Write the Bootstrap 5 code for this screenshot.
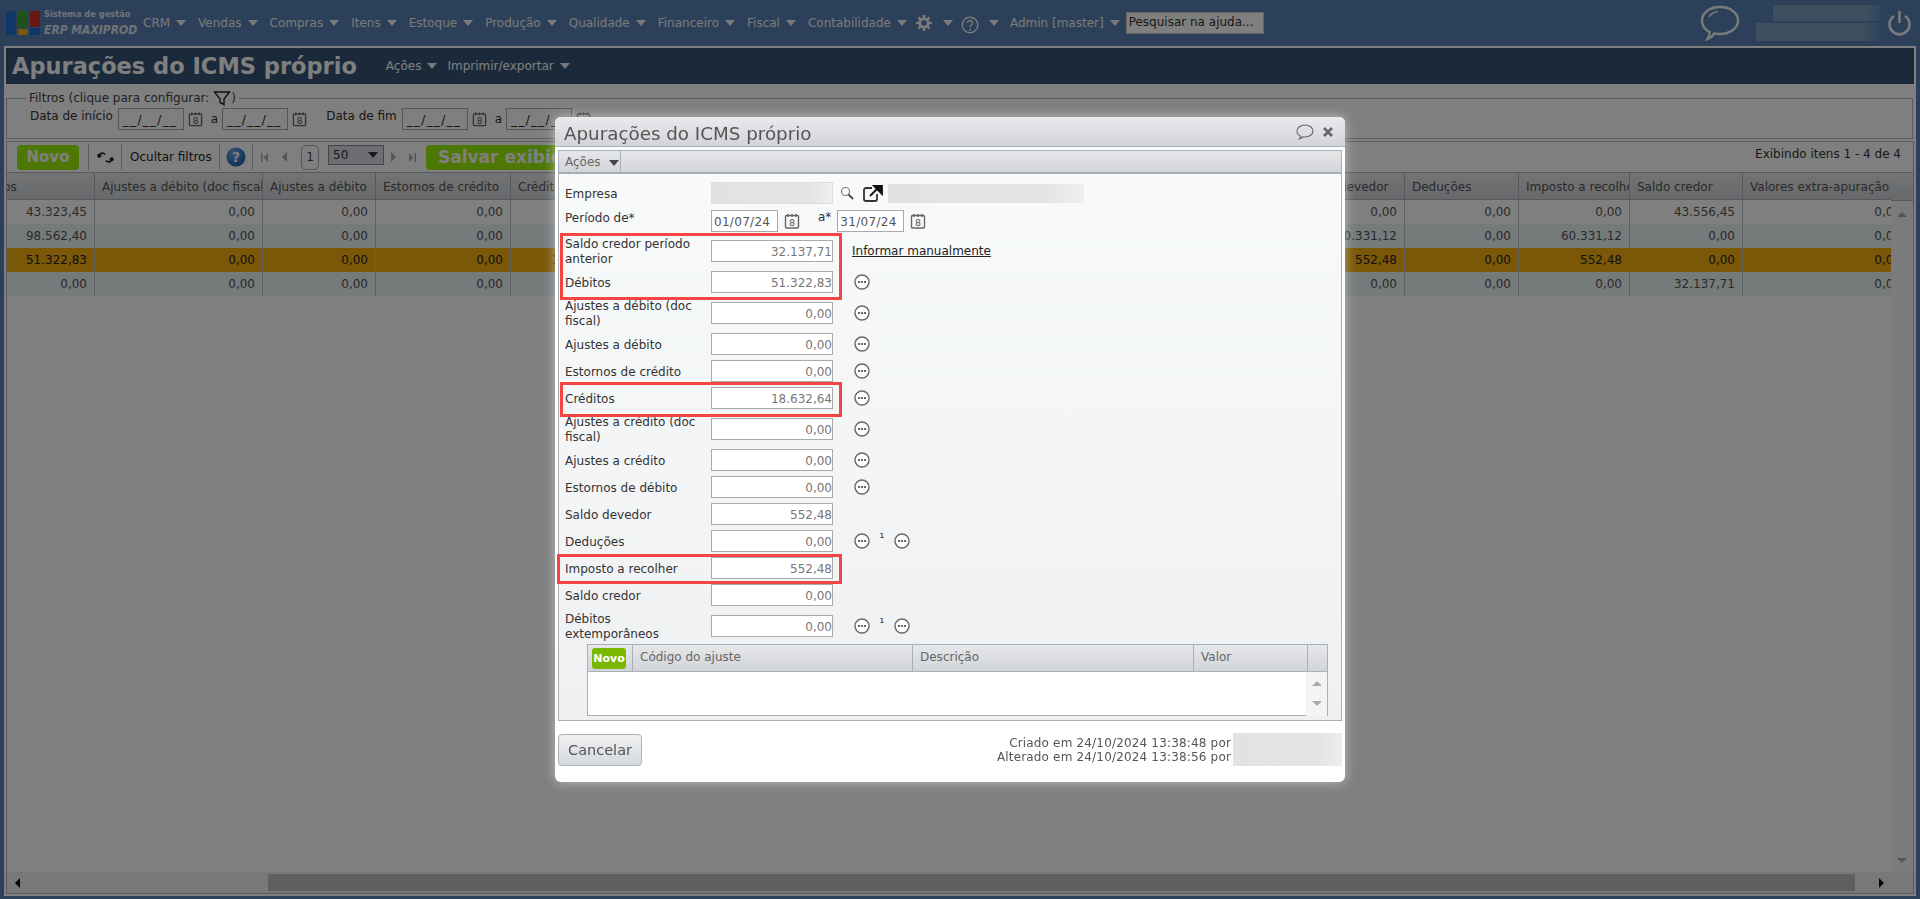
<!DOCTYPE html>
<html lang="pt-BR">
<head>
<meta charset="utf-8">
<title>Apurações do ICMS próprio</title>
<link href="https://cdn.jsdelivr.net/npm/bootstrap@5.3.0/dist/css/bootstrap.min.css" rel="stylesheet">
<style>
html,body{height:100%}
body{font-family:"DejaVu Sans",sans-serif;font-size:12px;line-height:15px;background:#5880b2;color:#333;overflow:hidden}
.topnav{height:46px;color:#f4f4f4;padding-left:6px}
.brandtxt{margin-left:4px;width:99px;color:#fff;opacity:.8;font-family:"DejaVu Sans Condensed","DejaVu Sans",sans-serif}
.brandtxt b{display:block;font-size:9.2px;line-height:14px;white-space:nowrap}
.brandtxt i{display:block;font-weight:700;font-size:12px;line-height:18px;white-space:nowrap}
.mitem{white-space:nowrap;margin-right:12px;display:flex;align-items:center}
.tri{display:inline-block;width:0;height:0;border-left:5px solid transparent;border-right:5px solid transparent;border-top:6px solid #f4f4f4;margin-left:6px}
.tri.dark{border-top-color:#333}
.srch{width:138px;height:22px;background:#fff;border:1px solid #ccc;color:#333;padding:2px 2px;white-space:nowrap;overflow:hidden}
.blurbox{background:linear-gradient(90deg,#7ba0c0,#7ba0c0 85%,#5f88b6)}
.frame{margin:0 4px 3px;border:2px solid #fff;background:#fff;min-height:0}
.titlebar{height:36px;background:#345476;color:#fff;padding-left:6px}
.titlebar h1{font-size:22.500px;font-weight:700;line-height:36px;margin:0 29px 0 0;white-space:nowrap}
.fs{border:1px solid #b0b8c0;margin:6px 1px 2px 0;padding:2px 0 9px 23px;height:49px}
.fs legend{float:none;width:auto;font-size:12px;line-height:15px;margin:0 0 0 -4px;padding:0 3px;display:flex;align-items:center;color:#444}
.dfield{width:66px;height:22px;border:1px solid #aab;padding:4px 4px;white-space:nowrap;background:#fff;color:#222;margin:0 4px 0 5px;line-height:15px;overflow:hidden;letter-spacing:1.300px}
.dlab{margin-top:-5px}
.da{margin:0 -1px 0 8px}
.panelx{border:1px solid #b0b8c0;min-height:0}
.tbar{height:30px;flex:none}
.tcell{height:26px;border-right:1px solid #b0b8c0;display:flex;align-items:center;flex:none}
.gbtn{background:#9cf00c;border:0;border-radius:4px;color:#fff;font-weight:700;height:25px;padding:0;font-size:15px;line-height:25px;text-align:center}
.gbtn.wide{margin-left:10px;width:190px;font-size:17px;text-align:left;padding-left:12px;white-space:nowrap}
.pgbox{width:18px;height:25px;border:1px solid #aab;border-radius:5px;text-align:center;line-height:23px;margin-left:14px;color:#444}
.pgsel{width:56px;height:20px;border:1px solid #889;background:#d8dde2;margin-left:9px;padding-left:4px;color:#333;line-height:14px;margin-top:-5px;display:flex;justify-content:space-between;align-items:center}
.gridwrap{width:1884px;overflow:hidden}
.gridt{table-layout:fixed;width:1945px;margin-left:-43px;border-collapse:separate;border-spacing:0}
.gridt th{height:28px;font-weight:400;padding:2px 0 0 7px;white-space:nowrap;overflow:hidden;background:linear-gradient(#e7e8ea,#cfd2d6);border-right:1px solid #aab2ba;border-top:1px solid #aab2ba;border-bottom:1px solid #aab2ba;color:#555}
.gridt td{height:24px;padding:0 7px 0 0;text-align:right;border-right:1px solid #b8c0c4;color:#555;white-space:nowrap;overflow:hidden}
.gridt tr.alt td{background:#ebf4f4}
.gridt tr.sel td{background:#f4b010;color:#222}
.vscroll{width:22px;background:#f6f6f6;flex:none}
.vhead{height:29px;background:linear-gradient(#e7e8ea,#cfd2d6);border-top:1px solid #aab2ba;border-bottom:1px solid #aab2ba}
.upa,.dna{width:0;height:0;border-left:5px solid transparent;border-right:5px solid transparent}
.upa{border-bottom:5px solid #aaa}
.dna{border-top:5px solid #aaa}
.hscroll{height:21px;flex:none;background:#f0f0f0}
.thumbx{height:17px;background:#bfbfbf;margin-left:248px;width:1587px}
.ltri,.rtri{width:0;height:0;border-top:5px solid transparent;border-bottom:5px solid transparent}
.ltri{border-right:5px solid #111}
.rtri{border-left:5px solid #111}
.veil{position:fixed;inset:0;background:rgba(0,0,0,.5)}
.dlg{position:absolute;left:555px;top:117px;width:790px;height:665px;background:#fff;border-radius:6px;box-shadow:0 0 12px rgba(255,255,255,.5);display:flex;flex-direction:column}
.dhead{height:30px;flex:none;background:linear-gradient(#e9eaec,#d2d4d8);border-bottom:1px solid #a8b0ba;border-radius:6px 6px 0 0;padding:0 12px 0 9px}
.dhead h2{font-size:18.300px;font-weight:400;line-height:30px;margin:5px 0 0;color:#555;white-space:nowrap}
.dpanel{margin:3px 3px 0;height:571px;flex:none;border:1px solid #a8b0ba;background:linear-gradient(#f8fbfa,#eff0f2);position:relative}
.dtool{height:23px;background:linear-gradient(#e6e7e9,#d2d4d8);border-bottom:2px solid #a8adb5;color:#666}
.dtool span.cell{width:62px;height:100%;border-right:1px solid #a8b0ba;display:flex;align-items:center;padding:2px 0 0 6px}
.formz{padding:5px 0 0 6px}
.frow{display:flex;align-items:center;height:27px;padding:3px 0 2px}
.frow.two{height:35px;padding:7px 0 6px}
.frow.h28{height:28px;padding:3px 0}
.frow.h26{height:26px;padding:3px 0 1px}
.lbl{width:146px;padding:2px 6px 0 0;flex:none;color:#333}
.lbl.up{margin-top:-8px}
.vbox.form-control{width:122px;height:22px;min-height:0;border:1px solid #aaa;border-radius:0;padding:4px 0 0 0;text-align:right;font-size:12px;line-height:15px;color:#777;background:#fff;flex:none;overflow:hidden;white-space:nowrap}
.vbox.form-control.dt{width:67px;text-align:left;padding-left:2px;color:#555;letter-spacing:.3px}
.acts{margin-left:21px;display:flex;align-items:center}
.sup1{margin:-6px 6px 0 6px;font-size:12px;width:12px;text-align:center;color:#333}
.blr{background:linear-gradient(90deg,#e2e2e2,#e4e4e2 80%,#eeeeee)}
.ifm{color:#222;text-decoration:underline;margin-left:19px;white-space:nowrap}
.subg{margin:1px 0 0 22px;width:741px;height:72px;border:1px solid #a8b0ba;background:#fff}
.sghead{height:27px;background:linear-gradient(#e6e7e9,#d2d4d8);border-bottom:1px solid #a8b0ba;color:#666}
.sghead div{height:100%;border-right:1px solid #a8b0ba;padding:5px 0 0 7px;flex:none}
.sgnovo{background:#7ab800;color:#fff;font-weight:700;font-size:11px;border-radius:3px;width:34px;height:21px;line-height:21px;text-align:center;display:block}
.sgbody{height:44px}
.sgsb{width:21px;background:#f4f4f4;height:100%}
.dfoot{padding:13px 3px 0;color:#555}
.cancelb{width:84px;height:32px;border:1px solid #aab2ba;border-radius:4px;background:linear-gradient(#eef0f1,#d6d9dd);color:#555;font-size:14.500px;padding:0}
.redbox{position:absolute;border:3px solid #f44444;pointer-events:none}
.ctext{text-align:right;line-height:14px;padding-top:3px;white-space:nowrap;letter-spacing:.17px}
</style>
</head>
<body class="d-flex flex-column">
<svg width="0" height="0" class="position-absolute">
  <symbol id="cal" viewBox="0 0 16 16"><rect x="1.5" y="2.5" width="13" height="12.5" rx="1" fill="none" stroke="#666" stroke-width="1.4"/><path d="M4 1v3M8 1v3M12 1v3" stroke="#666" stroke-width="1.4"/><text x="8" y="13" font-size="9.5" text-anchor="middle" fill="#555" font-family="DejaVu Sans">8</text></symbol>
  <symbol id="dots" viewBox="0 0 16 16"><circle cx="8" cy="8" r="7" fill="#fff" stroke="#666" stroke-width="1.4"/><circle cx="5" cy="8" r="1.1" fill="#444"/><circle cx="8" cy="8" r="1.1" fill="#444"/><circle cx="11" cy="8" r="1.1" fill="#444"/></symbol>
  <radialGradient id="ballg" cx="40%" cy="30%" r="75%"><stop offset="0" stop-color="#6aa6ea"/><stop offset="1" stop-color="#1f5cae"/></radialGradient>
</svg>

<nav class="topnav d-flex align-items-center flex-none">
  <svg width="34" height="24" viewBox="0 0 34 24"><rect x="0" y="0" width="10" height="24" rx="2" fill="#1e6fd0"/><rect x="12" y="0" width="10" height="17" rx="1" fill="#3aa635"/><rect x="12" y="18" width="10" height="6" rx="1" fill="#f0b020"/><rect x="24" y="0" width="10" height="16" rx="1" fill="#d03020"/><rect x="24" y="17" width="10" height="7" rx="1" fill="#1e6fd0"/></svg>
  <div class="brandtxt"><b>Sistema de gestão</b><i>ERP MAXIPROD</i></div>
  <div class="mitem">CRM<span class="tri"></span></div>
  <div class="mitem">Vendas<span class="tri"></span></div>
  <div class="mitem">Compras<span class="tri"></span></div>
  <div class="mitem">Itens<span class="tri"></span></div>
  <div class="mitem">Estoque<span class="tri"></span></div>
  <div class="mitem">Produção<span class="tri"></span></div>
  <div class="mitem">Qualidade<span class="tri"></span></div>
  <div class="mitem">Financeiro<span class="tri"></span></div>
  <div class="mitem">Fiscal<span class="tri"></span></div>
  <div class="mitem" style="margin-right:8px">Contabilidade<span class="tri"></span></div>
  <svg width="18" height="18" viewBox="0 0 18 18" class="me-2"><g stroke="#f4f4f4" stroke-width="2.6"><path d="M9 1v16M1 9h16M3.3 3.3l11.4 11.4M14.7 3.3L3.3 14.7"/></g><circle cx="9" cy="9" r="5.5" fill="#f4f4f4"/><circle cx="9" cy="9" r="2.8" fill="#5880b2"/></svg>
  <span class="tri me-2" style="margin-left:2px"></span>
  <svg width="18" height="18" viewBox="0 0 18 18" style="margin-top:3px"><circle cx="9" cy="9" r="7.8" fill="none" stroke="#f4f4f4" stroke-width="1.4"/><path d="M6.5 7a2.5 2.5 0 1 1 3.6 2.3c-.8.4-1.1.9-1.1 1.9" fill="none" stroke="#f4f4f4" stroke-width="1.4"/><circle cx="9" cy="13.4" r="1" fill="#f4f4f4"/></svg>
  <span class="tri" style="margin:0 11px 0 10px"></span>
  <div class="mitem" style="margin-right:6px">Admin [master]<span class="tri"></span></div>
  <div class="srch">Pesquisar na ajuda...</div>
  <div class="ms-auto d-flex align-items-center">
    <svg width="40" height="36" viewBox="0 0 40 36"><path d="M20 2c10.500 0 18 6 18 13.500S30.500 29 20 29c-2 0-4-.2-5.700-.7-1.500 2.400-3.800 4.700-6.800 5.700 1.400-2 2.100-4.100 2-7C5 24.500 2 20.300 2 15.500 2 8 9.500 2 20 2z" fill="none" stroke="#f4f4f4" stroke-width="2.400"/><path d="M9 12c1.500-3 4.500-5 9-5.500" fill="none" stroke="#f4f4f4" stroke-width="1.400"/></svg>
    <div class="d-flex flex-column align-items-end" style="margin:0 6px 0 16px">
      <div class="blurbox" style="width:108px;height:16px;margin-bottom:2px"></div>
      <div class="blurbox" style="width:125px;height:18px"></div>
    </div>
    <svg width="25" height="26" viewBox="0 0 25 26" class="me-2"><path d="M7 6a10 10 0 1 0 11 0" fill="none" stroke="#f4f4f4" stroke-width="2.600"/><path d="M12.500 1v12" stroke="#f4f4f4" stroke-width="2.600"/></svg>
  </div>
</nav>

<div class="frame flex-grow-1 d-flex flex-column">
  <div class="titlebar d-flex align-items-center">
    <h1>Apurações do ICMS próprio</h1>
    <div class="mitem" style="margin-right:10px">Ações<span class="tri"></span></div>
    <div class="mitem">Imprimir/exportar<span class="tri"></span></div>
  </div>
  <fieldset class="fs">
    <legend>Filtros (clique para configurar:&nbsp;<svg width="18" height="16" viewBox="0 0 18 16"><path d="M1.500 2h15l-5.500 7v5.500l-4-2V9z" fill="none" stroke="#222" stroke-width="1.400"/></svg>)</legend>
    <div class="d-flex align-items-center">
      <span class="dlab">Data de início</span><div class="dfield">__/__/__</div><svg width="15" height="16"><use href="#cal"/></svg>
      <span class="da">a</span><div class="dfield">__/__/__</div><svg width="15" height="16"><use href="#cal"/></svg>
      <span class="dlab" style="margin-left:19px">Data de fim</span><div class="dfield">__/__/__</div><svg width="15" height="16"><use href="#cal"/></svg>
      <span class="da">a</span><div class="dfield">__/__/__</div><svg width="15" height="16"><use href="#cal"/></svg>
    </div>
  </fieldset>
  <div class="panelx flex-grow-1 d-flex flex-column">
    <div class="tbar d-flex align-items-center">
      <div class="tcell" style="width:82px;padding-left:10px"><button class="gbtn" style="width:62px">Novo</button></div>
      <div class="tcell justify-content-center" style="width:33px"><svg width="17" height="13" viewBox="0 0 17 13"><path d="M8 3.500C6.500 1.500 3 1.500 2 5M.5 3.500 2 6l2.300-1.600M9 9.500c1.500 2 5 2 6-1.500M16.500 9.500 15 7l-2.300 1.600" fill="none" stroke="#222" stroke-width="1.800"/></svg></div>
      <div class="tcell" style="width:98px;padding-left:8px;white-space:nowrap;color:#222">Ocultar filtros</div>
      <div class="tcell justify-content-center" style="width:33px"><svg width="20" height="20" viewBox="0 0 20 20"><circle cx="10" cy="10" r="9.500" fill="url(#ballg)"/><text x="10" y="15" font-size="14" font-weight="700" fill="#fff" text-anchor="middle" font-family="DejaVu Sans">?</text></svg></div>
      <div class="d-flex align-items-center" style="padding-left:8px">
        <svg width="7" height="9" viewBox="0 0 7 9"><path d="M0 0h1.500v9H0zM7 0v9L2.500 4.500z" fill="#aaa"/></svg>
        <span class="ltri" style="margin-left:14px;border-right-color:#aaa"></span>
        <span class="pgbox">1</span>
        <span class="pgsel"><span>50</span><span class="tri dark" style="margin-right:5px"></span></span>
        <span class="rtri" style="margin-left:7px;border-left-color:#aaa"></span>
        <svg width="7" height="9" viewBox="0 0 7 9" style="margin-left:13px"><path d="M7 0H5.500v9H7zM0 0v9l4.500-4.500z" fill="#aaa"/></svg>
        <button class="gbtn wide">Salvar exibição</button>
      </div>
      <div class="ms-auto text-nowrap" style="margin-right:12px;color:#333;margin-top:-6px">Exibindo itens 1 - 4 de 4</div>
    </div>
    <div class="flex-grow-1 d-flex" style="min-height:0">
      <div class="gridwrap flex-none">
        <table class="gridt">
          <colgroup><col style="width:131px"><col style="width:168px"><col style="width:113px"><col style="width:135px"><col style="width:110px"><col style="width:168px"><col style="width:113px"><col style="width:393px"><col style="width:110px"><col style="width:114px"><col style="width:111px"><col style="width:113px"><col style="width:166px"></colgroup>
          <thead><tr><th>Débitos</th><th>Ajustes a débito (doc fiscal)</th><th>Ajustes a débito</th><th>Estornos de crédito</th><th>Créditos</th><th>Ajustes a crédito (doc fiscal)</th><th>Ajustes a crédito</th><th>Estornos de débito</th><th>Saldo devedor</th><th>Deduções</th><th>Imposto a recolher</th><th>Saldo credor</th><th>Valores extra-apuração</th></tr></thead>
          <tbody>
            <tr><td>43.323,45</td><td>0,00</td><td>0,00</td><td>0,00</td><td>0,00</td><td>0,00</td><td>0,00</td><td>0,00</td><td>0,00</td><td>0,00</td><td>0,00</td><td>43.556,45</td><td>0,00</td></tr>
            <tr class="alt"><td>98.562,40</td><td>0,00</td><td>0,00</td><td>0,00</td><td>0,00</td><td>0,00</td><td>0,00</td><td>0,00</td><td>60.331,12</td><td>0,00</td><td>60.331,12</td><td>0,00</td><td>0,00</td></tr>
            <tr class="sel"><td>51.322,83</td><td>0,00</td><td>0,00</td><td>0,00</td><td>18.632,64</td><td>0,00</td><td>0,00</td><td>0,00</td><td>552,48</td><td>0,00</td><td>552,48</td><td>0,00</td><td>0,00</td></tr>
            <tr class="alt"><td>0,00</td><td>0,00</td><td>0,00</td><td>0,00</td><td>0,00</td><td>0,00</td><td>0,00</td><td>0,00</td><td>0,00</td><td>0,00</td><td>0,00</td><td>32.137,71</td><td>0,00</td></tr>
          </tbody>
        </table>
      </div>
      <div class="vscroll d-flex flex-column align-items-center">
        <div class="vhead w-100 flex-none"></div>
        <div class="upa" style="margin-top:11px"></div>
        <div class="dna mt-auto" style="margin-bottom:9px"></div>
      </div>
    </div>
    <div class="hscroll d-flex align-items-center">
      <span class="ltri" style="margin-left:8px"></span>
      <div class="thumbx"></div>
      <span class="rtri" style="margin-left:24px"></span>
    </div>
  </div>
</div>

<div class="veil">
  <div class="dlg">
    <div class="dhead d-flex align-items-center">
      <h2>Apurações do ICMS próprio</h2>
      <svg class="ms-auto" width="18" height="16" viewBox="0 0 18 16"><path d="M9 1c4.500 0 8 2.500 8 6s-3.500 6-8 6c-.8 0-1.500-.1-2.200-.3-.8 1-1.900 1.900-3.300 2.300.6-1 .9-2 .8-3C2.200 11 1 9.200 1 7c0-3.500 3.500-6 8-6z" fill="none" stroke="#666" stroke-width="1.100"/></svg>
      <svg width="10" height="10" viewBox="0 0 10 10" style="margin-left:9px"><path d="M1 1l8 8M9 1l-8 8" stroke="#666" stroke-width="2.600"/></svg>
    </div>
    <div class="dpanel">
      <div class="dtool d-flex"><span class="cell">Ações<span class="tri" style="border-top-color:#444;margin-left:8px"></span></span></div>
      <div class="formz">
        <div class="frow h28"><div class="lbl">Empresa</div><div class="blr" style="width:122px;height:22px;border:1px solid #ddd"></div>
          <svg width="14" height="14" viewBox="0 0 14 14" style="margin-left:7px"><circle cx="5.500" cy="5.500" r="4" fill="none" stroke="#777" stroke-width="1.100"/><path d="M8.500 8.500 13 13" stroke="#444" stroke-width="1.800"/></svg>
          <svg width="20" height="17" viewBox="0 0 20 17" style="margin-left:9px"><path d="M9 3H3a2 2 0 0 0-2 2v9a2 2 0 0 0 2 2h9a2 2 0 0 0 2-2V9" fill="none" stroke="#333" stroke-width="1.800"/><path d="M7 11 16 2M11 1h8v8z" stroke="#111" stroke-width="1.800" fill="#111"/></svg>
          <div class="blr" style="width:196px;height:19px;margin-left:5px"></div></div>
        <div class="frow h26"><div class="lbl up">Período de*</div><div class="vbox form-control dt">01/07/24</div>
          <svg width="16" height="16" style="margin-left:6px"><use href="#cal"/></svg>
          <span style="margin:-8px 6px 0 18px;color:#333">a*</span><div class="vbox form-control dt">31/07/24</div>
          <svg width="16" height="16" style="margin-left:6px"><use href="#cal"/></svg></div>
        <div class="frow two"><div class="lbl">Saldo credor período anterior</div><div class="vbox form-control">32.137,71</div><a class="ifm" href="#">Informar manualmente</a></div>
        <div class="frow"><div class="lbl">Débitos</div><div class="vbox form-control">51.322,83</div><div class="acts"><svg width="16" height="16"><use href="#dots"/></svg></div></div>
        <div class="frow two"><div class="lbl">Ajustes a débito (doc fiscal)</div><div class="vbox form-control">0,00</div><div class="acts"><svg width="16" height="16"><use href="#dots"/></svg></div></div>
        <div class="frow"><div class="lbl">Ajustes a débito</div><div class="vbox form-control">0,00</div><div class="acts"><svg width="16" height="16"><use href="#dots"/></svg></div></div>
        <div class="frow"><div class="lbl">Estornos de crédito</div><div class="vbox form-control">0,00</div><div class="acts"><svg width="16" height="16"><use href="#dots"/></svg></div></div>
        <div class="frow"><div class="lbl">Créditos</div><div class="vbox form-control">18.632,64</div><div class="acts"><svg width="16" height="16"><use href="#dots"/></svg></div></div>
        <div class="frow two"><div class="lbl">Ajustes a crédito (doc fiscal)</div><div class="vbox form-control">0,00</div><div class="acts"><svg width="16" height="16"><use href="#dots"/></svg></div></div>
        <div class="frow"><div class="lbl">Ajustes a crédito</div><div class="vbox form-control">0,00</div><div class="acts"><svg width="16" height="16"><use href="#dots"/></svg></div></div>
        <div class="frow"><div class="lbl">Estornos de débito</div><div class="vbox form-control">0,00</div><div class="acts"><svg width="16" height="16"><use href="#dots"/></svg></div></div>
        <div class="frow"><div class="lbl">Saldo devedor</div><div class="vbox form-control">552,48</div></div>
        <div class="frow"><div class="lbl">Deduções</div><div class="vbox form-control">0,00</div><div class="acts"><svg width="16" height="16"><use href="#dots"/></svg><span class="sup1">¹</span><svg width="16" height="16"><use href="#dots"/></svg></div></div>
        <div class="frow"><div class="lbl">Imposto a recolher</div><div class="vbox form-control">552,48</div></div>
        <div class="frow"><div class="lbl">Saldo credor</div><div class="vbox form-control">0,00</div></div>
        <div class="frow two"><div class="lbl">Débitos extemporâneos</div><div class="vbox form-control">0,00</div><div class="acts"><svg width="16" height="16"><use href="#dots"/></svg><span class="sup1">¹</span><svg width="16" height="16"><use href="#dots"/></svg></div></div>
        <div class="subg">
          <div class="sghead d-flex">
            <div style="width:45px;padding:3px 0 0 4px"><span class="sgnovo">Novo</span></div>
            <div style="width:280px">Código do ajuste</div>
            <div style="width:281px">Descrição</div>
            <div style="width:114px">Valor</div>
          </div>
          <div class="sgbody d-flex justify-content-end"><div class="sgsb d-flex flex-column align-items-center justify-content-between" style="padding:9px 0 10px"><span class="upa"></span><span class="dna"></span></div></div>
        </div>
      </div>
      <div class="redbox" style="left:1px;top:82px;width:282px;height:67px"></div>
      <div class="redbox" style="left:1px;top:231px;width:282px;height:35px"></div>
      <div class="redbox" style="left:-2px;top:403px;width:285px;height:30px"></div>
    </div>
    <div class="dfoot d-flex justify-content-between">
      <button class="cancelb">Cancelar</button>
      <div class="d-flex" style="margin-top:-1px">
        <div class="ctext">Criado em 24/10/2024 13:38:48 por<br>Alterado em 24/10/2024 13:38:56 por</div>
        <div class="blr" style="width:109px;height:33px;margin-left:2px"></div>
      </div>
    </div>
  </div>
</div>
<script src="https://cdn.jsdelivr.net/npm/bootstrap@5.3.0/dist/js/bootstrap.bundle.min.js"></script>
</body>
</html>
